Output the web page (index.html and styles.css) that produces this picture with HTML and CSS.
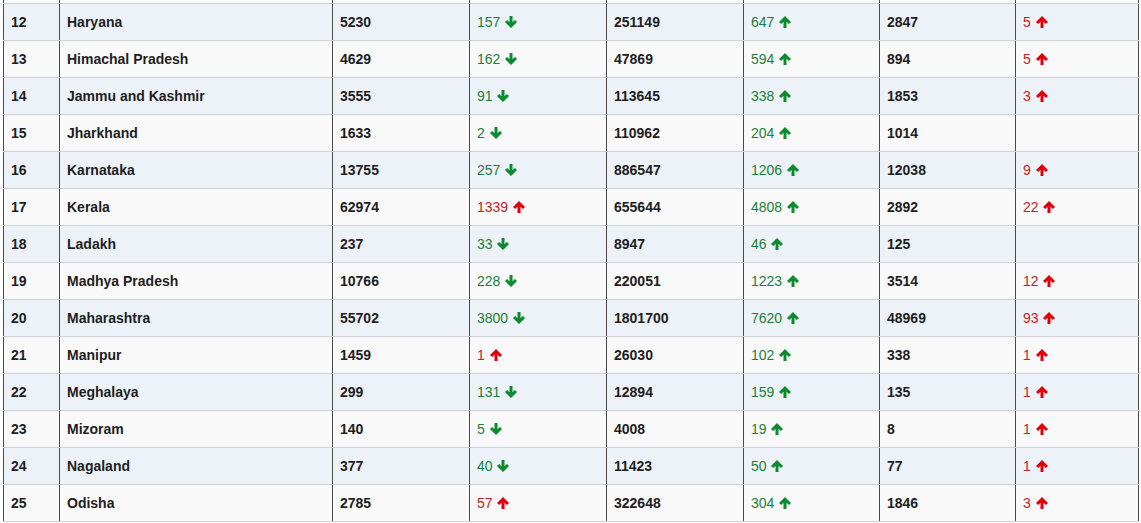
FILE: index.html
```html
<!DOCTYPE html>
<html>
<head>
<meta charset="utf-8">
<link rel="stylesheet" href="styles.css">
</head>
<body>
<svg class="defs" width="0" height="0" aria-hidden="true">
  <defs>
    <symbol id="up" viewBox="0 0 12 12">
      <path d="M6 0 L12 6 L9.9 8.1 L7.5 5.7 L7.5 12 L4.5 12 L4.5 5.7 L2.1 8.1 L0 6 Z"/>
    </symbol>
    <symbol id="down" viewBox="0 0 12 12">
      <path d="M6 12 L12 6 L9.9 3.9 L7.5 6.3 L7.5 0 L4.5 0 L4.5 6.3 L2.1 3.9 L0 6 Z"/>
    </symbol>
  </defs>
</svg>
<table class="states">
  <colgroup>
    <col class="c-no"><col class="c-name"><col class="c-num"><col class="c-num"><col class="c-num"><col class="c-num2"><col class="c-num2"><col class="c-last">
  </colgroup>
  <tbody>
    <tr class="cut"><td></td><td></td><td></td><td></td><td></td><td></td><td></td><td></td></tr>
    <tr><td>12</td><td>Haryana</td><td>5230</td><td class="g">157 <svg class="arr"><use href="#down"/></svg></td><td>251149</td><td class="g">647 <svg class="arr"><use href="#up"/></svg></td><td>2847</td><td class="r">5 <svg class="arr"><use href="#up"/></svg></td></tr>
    <tr><td>13</td><td>Himachal Pradesh</td><td>4629</td><td class="g">162 <svg class="arr"><use href="#down"/></svg></td><td>47869</td><td class="g">594 <svg class="arr"><use href="#up"/></svg></td><td>894</td><td class="r">5 <svg class="arr"><use href="#up"/></svg></td></tr>
    <tr><td>14</td><td>Jammu and Kashmir</td><td>3555</td><td class="g">91 <svg class="arr"><use href="#down"/></svg></td><td>113645</td><td class="g">338 <svg class="arr"><use href="#up"/></svg></td><td>1853</td><td class="r">3 <svg class="arr"><use href="#up"/></svg></td></tr>
    <tr><td>15</td><td>Jharkhand</td><td>1633</td><td class="g">2 <svg class="arr"><use href="#down"/></svg></td><td>110962</td><td class="g">204 <svg class="arr"><use href="#up"/></svg></td><td>1014</td><td></td></tr>
    <tr><td>16</td><td>Karnataka</td><td>13755</td><td class="g">257 <svg class="arr"><use href="#down"/></svg></td><td>886547</td><td class="g">1206 <svg class="arr"><use href="#up"/></svg></td><td>12038</td><td class="r">9 <svg class="arr"><use href="#up"/></svg></td></tr>
    <tr><td>17</td><td>Kerala</td><td>62974</td><td class="r">1339 <svg class="arr"><use href="#up"/></svg></td><td>655644</td><td class="g">4808 <svg class="arr"><use href="#up"/></svg></td><td>2892</td><td class="r">22 <svg class="arr"><use href="#up"/></svg></td></tr>
    <tr><td>18</td><td>Ladakh</td><td>237</td><td class="g">33 <svg class="arr"><use href="#down"/></svg></td><td>8947</td><td class="g">46 <svg class="arr"><use href="#up"/></svg></td><td>125</td><td></td></tr>
    <tr><td>19</td><td>Madhya Pradesh</td><td>10766</td><td class="g">228 <svg class="arr"><use href="#down"/></svg></td><td>220051</td><td class="g">1223 <svg class="arr"><use href="#up"/></svg></td><td>3514</td><td class="r">12 <svg class="arr"><use href="#up"/></svg></td></tr>
    <tr><td>20</td><td>Maharashtra</td><td>55702</td><td class="g">3800 <svg class="arr"><use href="#down"/></svg></td><td>1801700</td><td class="g">7620 <svg class="arr"><use href="#up"/></svg></td><td>48969</td><td class="r">93 <svg class="arr"><use href="#up"/></svg></td></tr>
    <tr><td>21</td><td>Manipur</td><td>1459</td><td class="r">1 <svg class="arr"><use href="#up"/></svg></td><td>26030</td><td class="g">102 <svg class="arr"><use href="#up"/></svg></td><td>338</td><td class="r">1 <svg class="arr"><use href="#up"/></svg></td></tr>
    <tr><td>22</td><td>Meghalaya</td><td>299</td><td class="g">131 <svg class="arr"><use href="#down"/></svg></td><td>12894</td><td class="g">159 <svg class="arr"><use href="#up"/></svg></td><td>135</td><td class="r">1 <svg class="arr"><use href="#up"/></svg></td></tr>
    <tr><td>23</td><td>Mizoram</td><td>140</td><td class="g">5 <svg class="arr"><use href="#down"/></svg></td><td>4008</td><td class="g">19 <svg class="arr"><use href="#up"/></svg></td><td>8</td><td class="r">1 <svg class="arr"><use href="#up"/></svg></td></tr>
    <tr><td>24</td><td>Nagaland</td><td>377</td><td class="g">40 <svg class="arr"><use href="#down"/></svg></td><td>11423</td><td class="g">50 <svg class="arr"><use href="#up"/></svg></td><td>77</td><td class="r">1 <svg class="arr"><use href="#up"/></svg></td></tr>
    <tr><td>25</td><td>Odisha</td><td>2785</td><td class="r">57 <svg class="arr"><use href="#up"/></svg></td><td>322648</td><td class="g">304 <svg class="arr"><use href="#up"/></svg></td><td>1846</td><td class="r">3 <svg class="arr"><use href="#up"/></svg></td></tr>
  </tbody>
</table>
</body>
</html>
```
FILE: styles.css
```css
html, body {
  margin: 0;
  padding: 0;
  background: #ffffff;
}
body {
  font-family: "Liberation Sans", Arial, sans-serif;
  font-size: 14px;
  color: #111;
  padding-left: 3px;
}
.defs {
  position: absolute;
  width: 0;
  height: 0;
}
.states {
  border-collapse: collapse;
  table-layout: fixed;
  width: 1135px;
}
.c-no { width: 56px; }
.c-name { width: 273px; }
.c-num { width: 137px; }
.c-num2 { width: 136px; }
.c-last { width: 123px; }
.states td {
  height: 37px;
  padding: 0 7px;
  border-left: 1px solid #4a4a4a;
  border-right: 1px solid #4a4a4a;
  border-top: 1px solid #cfd3d8;
  border-bottom: 1px solid #cfd3d8;
  font-weight: bold;
  color: #1e1e1e;
  vertical-align: middle;
  box-sizing: border-box;
  white-space: nowrap;
}
.states tr.cut td {
  height: 3px;
  padding: 0;
  border-top: none;
}
.states tbody tr:nth-child(even) td { background: #edf2f8; }
.states tbody tr:nth-child(odd) td { background: #f9f9f9; }
.states tr.cut td { background: #f9f9f9; }
.states td.g {
  color: #1c7f3c;
  font-weight: normal;
}
.states td.r {
  color: #c31f25;
  font-weight: normal;
}
.arr {
  width: 12px;
  height: 12px;
  vertical-align: -1px;
  margin-left: 1px;
}
.g .arr { fill: #0b8a2e; }
.r .arr { fill: #e0000b; }
```
